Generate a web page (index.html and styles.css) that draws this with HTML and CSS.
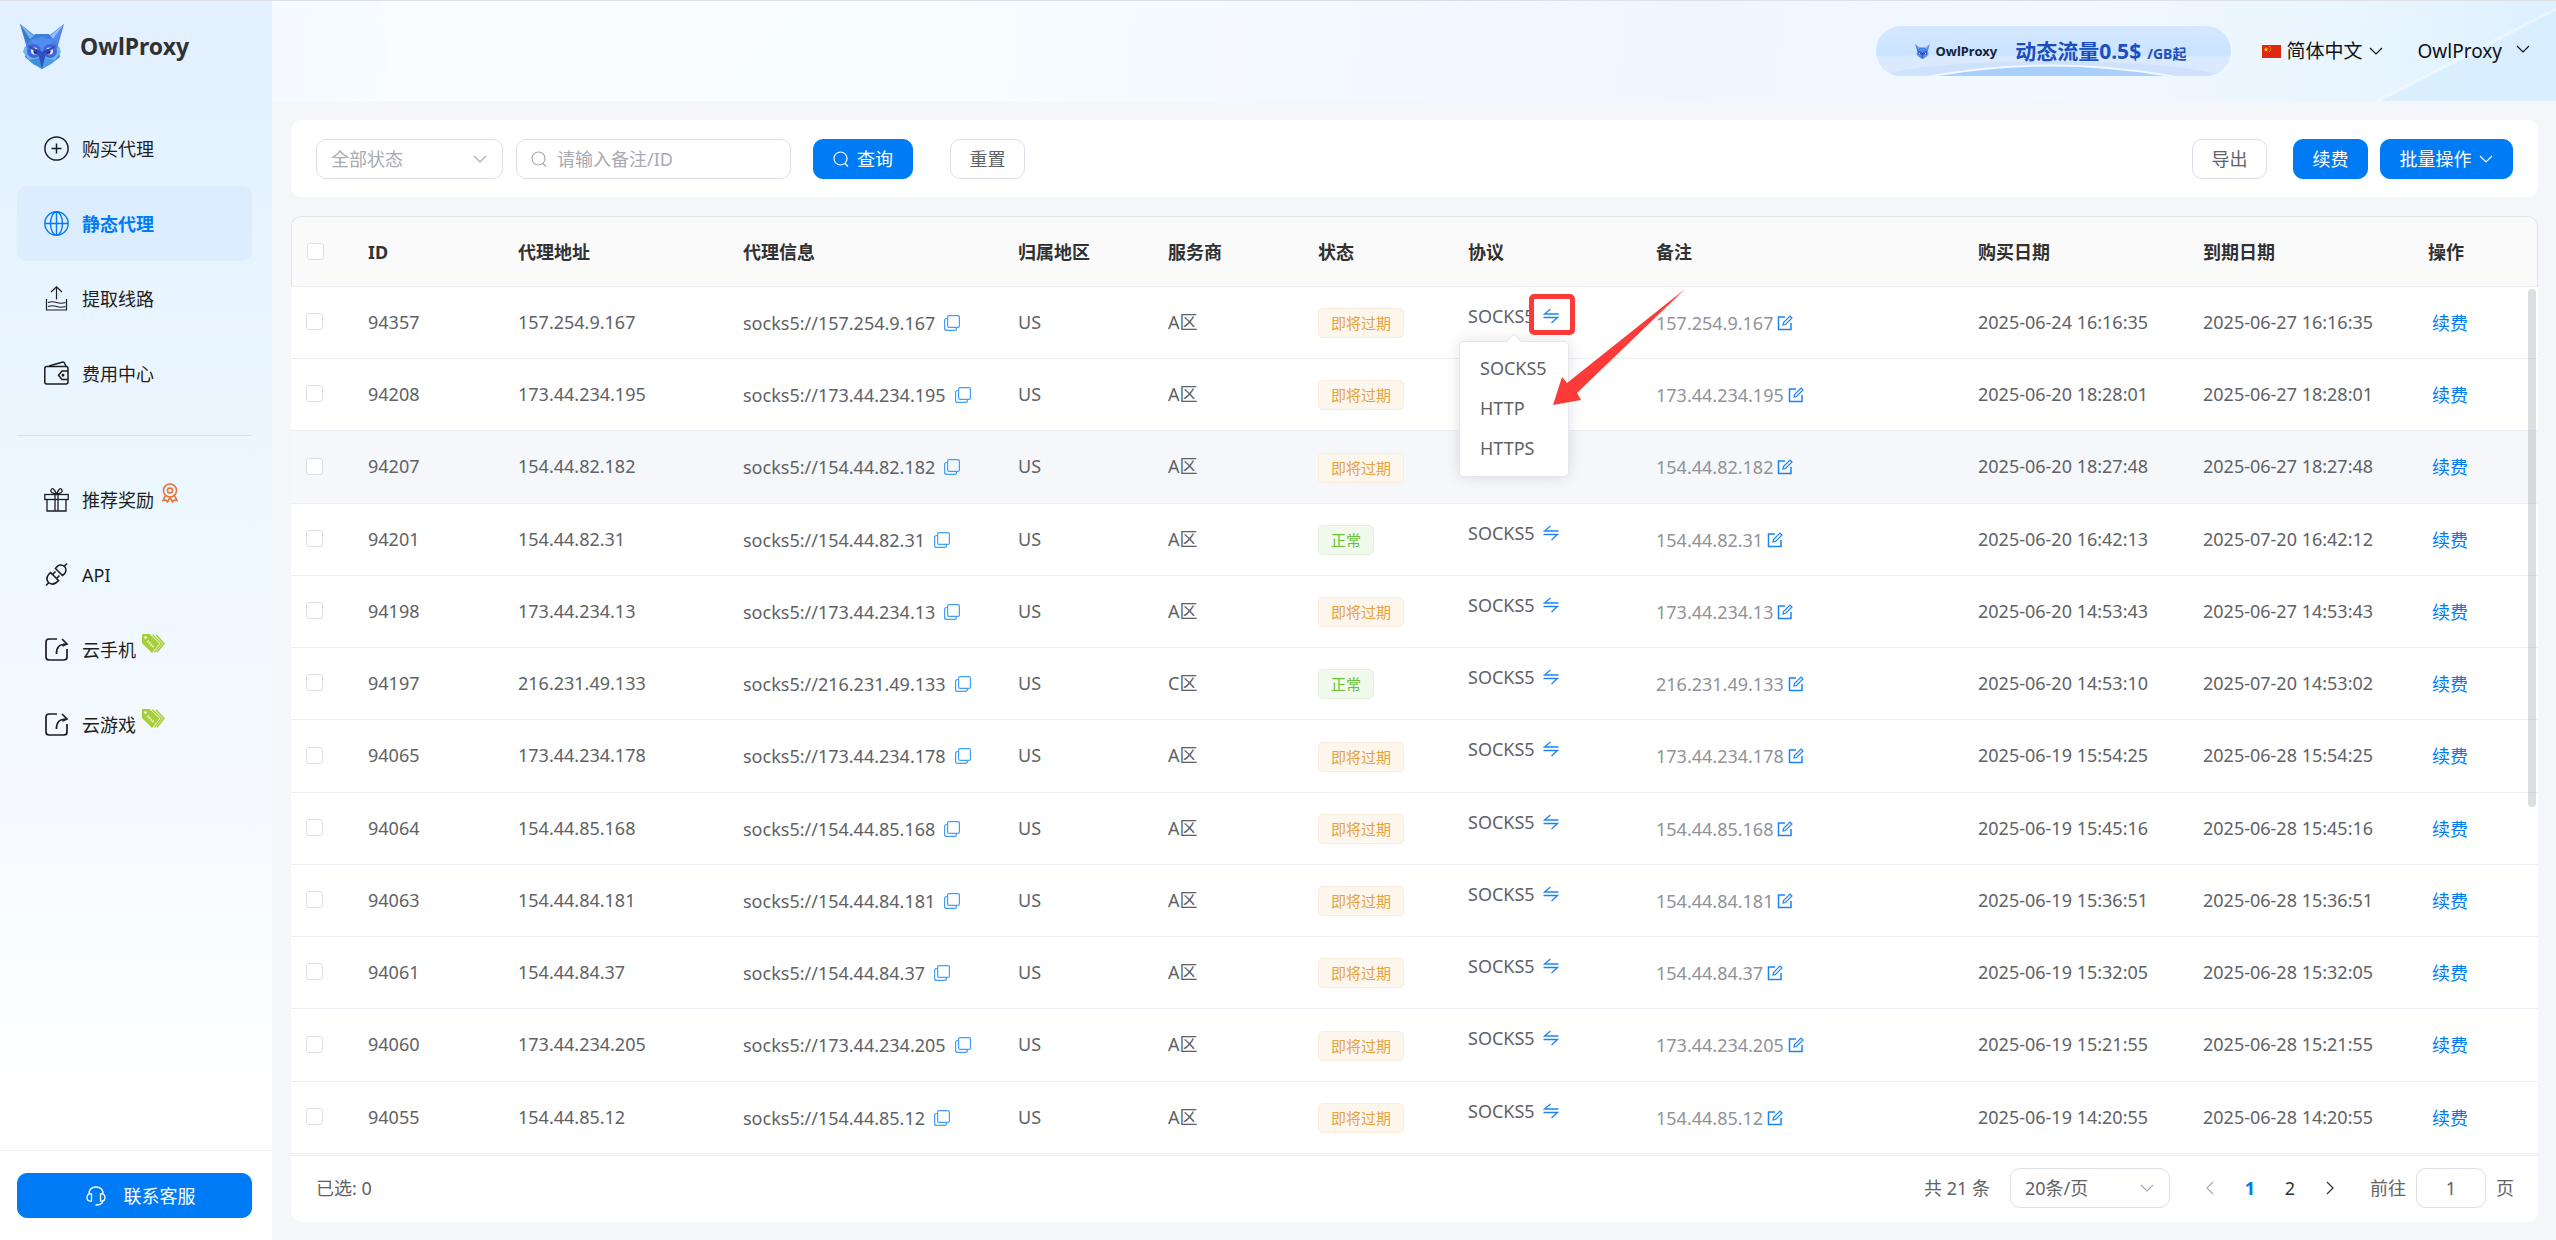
FILE: index.html
```html
<!DOCTYPE html>
<html lang="zh-CN">
<head>
<meta charset="utf-8">
<title>OwlProxy</title>
<link rel="stylesheet" href="styles.css">
</head>
<body>
<svg class="sprite" aria-hidden="true">
  <symbol id="owl" viewBox="0 0 44 46">
    <path d="M0 1 L14 12 L30 12 L44 1 L38 22 L40 34 L31 41 L22 46 L13 41 L5 34 L6 22Z" fill="#4a7fe6"/>
    <path d="M0 1 L14 13 L7 20Z" fill="#3a78c8"/><path d="M0 1 L14 13 L10 16Z" fill="#74b4ee"/>
    <path d="M44 1 L30 13 L37 20Z" fill="#5a84fa"/><path d="M44 1 L30 13 L33 16Z" fill="#8cc4fa"/>
    <path d="M15 11 L29 11 L34 18 L22 16 L10 18Z" fill="#3f7fdc"/>
    <path d="M10 17 L22 14 L34 17 L22 32Z" fill="#4f8df2"/>
    <path d="M5 23 L3 29 L9 37 L22 46 L35 37 L41 29 L39 23 L28 34 L22 30 L16 34Z" fill="#6cb8ee"/>
    <path d="M9 37 L19 35 L22 46Z" fill="#3c8fd8"/><path d="M35 37 L25 35 L22 46Z" fill="#4a9ee4"/>
    <circle cx="14" cy="28" r="7" fill="#4663de"/><circle cx="30" cy="28" r="7" fill="#4663de"/>
    <circle cx="14.500" cy="28" r="3.500" fill="#dfe9ff"/><circle cx="29.500" cy="28" r="3.500" fill="#dfe9ff"/>
    <circle cx="16" cy="28.500" r="2.500" fill="#1b2f78"/><circle cx="28" cy="28.500" r="2.500" fill="#1b2f78"/>
    <path d="M8 22 L22 29 L36 22 L34 25 L22 33 L10 25Z" fill="#2c49b8"/>
    <path d="M18 31 L22 28 L26 31 L22 46Z" fill="#2d53c0"/>
  </symbol>
  <symbol id="chev" viewBox="0 0 16 16"><path d="M2 5 L8 11 L14 5" fill="none" stroke="currentColor" stroke-width="1.2"/></symbol>
  <symbol id="search" viewBox="0 0 16 16"><g fill="none" stroke="currentColor" stroke-width="1.2"><circle cx="7.5" cy="7.5" r="6.5"/><path d="M11.5 12 L15 15.500"/></g></symbol>
  <symbol id="copy" viewBox="0 0 16 16"><g fill="none" stroke="currentColor" stroke-width="1.2"><rect x="3.600" y="0.600" width="11.800" height="11.800" rx="1.500"/><path d="M3.600 3.500 H2.500 Q0.600 3.500 0.600 5.400 V13.400 Q0.600 15.400 2.600 15.400 H10.500 Q12.400 15.400 12.400 13.500 V12.500"/></g></symbol>
  <symbol id="edit" viewBox="0 0 16 16"><g fill="none" stroke="currentColor" stroke-width="1.500"><path d="M8 2 H1.500 V14.500 H14 V8"/><path d="M6 10 L6.500 7.500 L13 1 L15 3 L8.500 9.500Z" stroke-width="1.200"/></g></symbol>
  <symbol id="swap" viewBox="0 0 16 16"><path d="M7.500 1 L1.500 6 H15.500 M0.500 9.500 H14.500 L8.500 15" fill="none" stroke="currentColor" stroke-width="1.300"/></symbol>
  <symbol id="share" viewBox="0 0 25 25"><g fill="none" stroke="currentColor" stroke-width="1.700"><path d="M13 2 H5 Q2 2 2 5 V20 Q2 23 5 23 H20 Q23 23 23 20 V12"/><path d="M12.500 17 Q12 7 22.500 7 M18 2 L23 7 L18.500 9"/></g></symbol>
  <symbol id="sale" viewBox="0 0 23 19"><path d="M0 1 Q0 0 1 0 H7.500 L17.500 9.500 L10 19 L0 9Z" fill="#a6ce39"/><path d="M10.500 0.700 L19.500 9.500 L12.500 18.300 M14 0.700 L22 9.500 L15 18.300" fill="none" stroke="#a6ce39" stroke-width="1.500"/><circle cx="3.500" cy="3.500" r="1.300" fill="#fff"/><path d="M5.500 7 L11.500 13" stroke="#e5f2c0" stroke-width="2.500" stroke-dasharray="1.500 0.800"/></symbol>
</svg>
<div class="app">
  <aside class="side">
    <a class="brand" href="#"><svg class="brand-logo"><use href="#owl"/></svg><span>OwlProxy</span></a>
    <nav class="nav">
      <a class="nav-item" href="#"><svg class="nav-icon" viewBox="0 0 25 25"><g fill="none" stroke="currentColor" stroke-width="1.500"><circle cx="12.500" cy="12.500" r="11.600"/><path d="M12.500 7.500 V17.500 M7.500 12.500 H17.500"/></g></svg><span>购买代理</span></a>
      <a class="nav-item active" href="#"><svg class="nav-icon" viewBox="0 0 25 25"><g fill="none" stroke="currentColor" stroke-width="1.400"><circle cx="12.500" cy="12.500" r="11.700"/><ellipse cx="12.500" cy="12.500" rx="6" ry="11.700"/><path d="M12.500 1 V24 M1 12.500 H24"/></g></svg><span>静态代理</span></a>
      <a class="nav-item" href="#"><svg class="nav-icon" viewBox="0 0 25 25"><g fill="none" stroke="currentColor" stroke-width="1.200"><path d="M12.500 13.500 V1 M7 6 L12.500 0.800 L18 6 M2.500 13 V24 H22.500 V13"/><path d="M4 16.500 Q8 15 12.500 16.500 T21.500 16.500 M4 20.500 Q8 19 12.500 20.500 T21.500 20.500"/></g></svg><span>提取线路</span></a>
      <a class="nav-item" href="#"><svg class="nav-icon" viewBox="0 0 25 25"><g fill="none" stroke="currentColor" stroke-width="1.500"><rect x="0.800" y="5.500" width="23.200" height="17.500" rx="2"/><path d="M5 5 L18 1.200 Q20 0.700 21 3 L22 5.500 M24 10 H18 L14.500 14.200 L18 18.500 H24"/><circle cx="19" cy="14.300" r="0.700"/></g></svg><span>费用中心</span></a>
    </nav>
    <nav class="nav nav-second">
      <a class="nav-item" href="#"><svg class="nav-icon" viewBox="0 0 25 25"><g fill="none" stroke="currentColor" stroke-width="1.300"><rect x="0.800" y="7.500" width="23.400" height="5"/><path d="M3 12.500 V24 H22 V12.500 M11 7.500 V24 M14 7.500 V24 M12.500 7 Q6 6 7 3 Q9 -1 12.500 7 Q16 -1 18 3 Q19 6 12.500 7"/></g></svg><span>推荐奖励</span><svg class="medal" viewBox="0 0 16 20"><g fill="none" stroke="#e8743b" stroke-width="1.600"><circle cx="8" cy="7.500" r="6.500"/><circle cx="8" cy="7.500" r="2.500"/><path d="M3.500 12.500 L1 17.500 L4 17 L5.500 19 L8 14.500 L10.500 19 L12 17 L15 17.500 L12.500 12.500"/></g></svg></a>
      <a class="nav-item" href="#"><svg class="nav-icon" viewBox="0 0 25 25"><g fill="none" stroke="currentColor" stroke-width="1.600"><path d="M2 23.500 L5 20.500 M20 4.500 L23 1.500"/><path d="M6.500 10.500 L14.500 18.500 C11 22.500 7.500 23 4.500 20.500 C2 17.500 2.500 14 6.500 10.500Z"/><path d="M11.500 6.500 L18.500 13.500 C22.500 10.500 23 7 20.500 4.500 C17.500 2 14 2.500 11.500 6.500Z"/><path d="M8.500 12.500 L11.500 9.500 M12.500 16.500 L15.500 13.500"/></g></svg><span>API</span></a>
      <a class="nav-item" href="#"><svg class="nav-icon"><use href="#share"/></svg><span>云手机</span><svg class="sale"><use href="#sale"/></svg></a>
      <a class="nav-item" href="#"><svg class="nav-icon"><use href="#share"/></svg><span>云游戏</span><svg class="sale"><use href="#sale"/></svg></a>
    </nav>
    <div class="side-foot">
      <button class="btn primary contact" type="button"><svg class="headset" viewBox="0 0 20 20"><g fill="none" stroke="currentColor" stroke-width="1.300"><path d="M3 8 Q3 1 10 1 T17 8 M17 15 Q16 19 9.500 19"/><path d="M5.500 8 Q1 7.500 1 11.500 T5.500 15Z M14.500 8 Q19 7.500 19 11.500 T14.500 15Z"/></g></svg><span>联系客服</span></button>
    </div>
  </aside>
  <div class="main">
    <header class="top">
      <svg class="top-bg" viewBox="0 0 2284 100" preserveAspectRatio="none" aria-hidden="true"><path d="M108 0 L122 100 H420 L520 0Z" fill="#fff" opacity=".3"/><path d="M2284 10 L2110 100 H2284Z" fill="#d6edfe" opacity=".7"/><path d="M2284 8 L2105 100" stroke="#fff" stroke-width="3" opacity=".35"/></svg>
      <a class="promo" href="#">
        <svg class="promo-bg" viewBox="0 0 355 50" preserveAspectRatio="none" aria-hidden="true"><ellipse cx="175" cy="58" rx="185" ry="23" fill="#cfe2fd"/><path d="M45 52 Q175 27 305 52" fill="#a9cffd" stroke="#f2f8ff" stroke-width="2"/></svg>
        <svg class="promo-owl"><use href="#owl"/></svg><b class="promo-name">OwlProxy</b><b class="promo-main">动态流量0.5$</b><b class="promo-unit">/GB起</b>
      </a>
      <button class="pick lang" type="button"><svg class="flag" viewBox="0 0 19 13"><rect width="19" height="13" fill="#de2910"/><path d="M4 2 L4.600 3.700 H6.400 L5 4.700 L5.500 6.500 L4 5.400 L2.500 6.500 L3 4.700 L1.600 3.700 H3.400Z" fill="#ffde00"/><path d="M7 1.500h1M8 3h1M8 5h1M7 6.500h1" stroke="#ffde00" stroke-width=".8"/></svg><span>简体中文</span><svg class="chev"><use href="#chev"/></svg></button>
      <button class="pick user" type="button"><span>OwlProxy</span><svg class="chev"><use href="#chev"/></svg></button>
    </header>
    <main class="content">
      <form class="filters">
        <span class="select-wrap status"><select class="field" aria-label="状态"><option>全部状态</option></select><svg class="chev"><use href="#chev"/></svg></span>
        <span class="search-wrap"><svg class="lens"><use href="#search"/></svg><input class="field" type="text" placeholder="请输入备注/ID" aria-label="备注/ID"></span>
        <button class="btn primary query" type="button"><svg class="lens"><use href="#search"/></svg><span>查询</span></button>
        <button class="btn reset" type="button">重置</button>
        <span class="spacer"></span>
        <button class="btn export" type="button">导出</button>
        <button class="btn primary renew" type="button">续费</button>
        <button class="btn primary batch" type="button"><span>批量操作</span><svg class="chev"><use href="#chev"/></svg></button>
      </form>
      <section class="panel">
        <div class="table-box">
          <table class="grid">
            <colgroup><col class="c-check"><col class="c-150"><col class="c-225"><col class="c-275"><col class="c-150"><col class="c-150"><col class="c-150"><col class="c-188"><col><col class="c-225"><col class="c-225"><col class="c-125"></colgroup>
            <thead><tr><th><input class="tick" type="checkbox" aria-label="全选"></th><th>ID</th><th>代理地址</th><th>代理信息</th><th>归属地区</th><th>服务商</th><th>状态</th><th>协议</th><th>备注</th><th>购买日期</th><th>到期日期</th><th>操作</th></tr></thead>
            <tbody id="rows"></tbody>
          </table>
          <div class="scroll-thumb"></div>
        </div>
        <footer class="foot">
          <span class="picked">已选: 0</span>
          <span class="spacer"></span>
          <span class="total">共 21 条</span>
          <span class="select-wrap size"><select class="field" aria-label="每页条数"><option>20条/页</option></select><svg class="chev"><use href="#chev"/></svg></span>
          <div class="pages">
            <button class="page" type="button" aria-label="上一页" disabled><svg class="chev prev"><use href="#chev"/></svg></button>
            <button class="page current" type="button">1</button>
            <button class="page" type="button">2</button>
            <button class="page" type="button" aria-label="下一页"><svg class="chev next"><use href="#chev"/></svg></button>
          </div>
          <label class="jump"><span>前往</span><input class="field" type="text" value="1"><span>页</span></label>
        </footer>
      </section>
    </main>
  </div>
</div>
<script src="rows.js"></script>
</body>
</html>
```
FILE: rows.js
```js
const rows = [
  ["94357", "157.254.9.167", "A", 0, "2025-06-24 16:16:35", "2025-06-27 16:16:35"],
  ["94208", "173.44.234.195", "A", 0, "2025-06-20 18:28:01", "2025-06-27 18:28:01"],
  ["94207", "154.44.82.182", "A", 0, "2025-06-20 18:27:48", "2025-06-27 18:27:48"],
  ["94201", "154.44.82.31", "A", 1, "2025-06-20 16:42:13", "2025-07-20 16:42:12"],
  ["94198", "173.44.234.13", "A", 0, "2025-06-20 14:53:43", "2025-06-27 14:53:43"],
  ["94197", "216.231.49.133", "C", 1, "2025-06-20 14:53:10", "2025-07-20 14:53:02"],
  ["94065", "173.44.234.178", "A", 0, "2025-06-19 15:54:25", "2025-06-28 15:54:25"],
  ["94064", "154.44.85.168", "A", 0, "2025-06-19 15:45:16", "2025-06-28 15:45:16"],
  ["94063", "154.44.84.181", "A", 0, "2025-06-19 15:36:51", "2025-06-28 15:36:51"],
  ["94061", "154.44.84.37", "A", 0, "2025-06-19 15:32:05", "2025-06-28 15:32:05"],
  ["94060", "173.44.234.205", "A", 0, "2025-06-19 15:21:55", "2025-06-28 15:21:55"],
  ["94055", "154.44.85.12", "A", 0, "2025-06-19 14:20:55", "2025-06-28 14:20:55"]
];
const openRow = 0;
const icon = (name) => `<svg class="ico"><use href="#${name}"/></svg>`;
const menu = `<span class="marker"></span>
  <div class="menu" role="menu"><button type="button" role="menuitem">SOCKS5</button><button type="button" role="menuitem">HTTP</button><button type="button" role="menuitem">HTTPS</button></div>
  <svg class="pointer" viewBox="0 0 136 120" aria-hidden="true"><path d="M1 117 L10 89 L15 95 L133 1 L25 105 L29 112Z" fill="#fc3a38"/></svg>`;
// The two rows below the open menu lie under it, so their protocol is not painted.
const covered = (i) => i === openRow + 1 || i === openRow + 2;
document.getElementById("rows").innerHTML = rows.map(([id, ip, zone, ok, from, to], i) => `
<tr class="${i === 2 ? "hover" : ""}">
  <td><input class="tick" type="checkbox" aria-label="${id}"></td>
  <td>${id}</td>
  <td>${ip}</td>
  <td><span class="pair info">socks5://${ip}<button class="mini copy" type="button" aria-label="复制">${icon("copy")}</button></span></td>
  <td>US</td>
  <td>${zone}区</td>
  <td class="low"><span class="tag ${ok ? "ok" : "warn"}">${ok ? "正常" : "即将过期"}</span></td>
  <td>${covered(i) ? "" : `<span class="pair protocol">SOCKS5<button class="mini" type="button" aria-label="切换">${icon("swap")}</button>${i === openRow ? menu : ""}</span>`}</td>
  <td><span class="pair note">${ip}<button class="mini" type="button" aria-label="编辑">${icon("edit")}</button></span></td>
  <td>${from}</td>
  <td>${to}</td>
  <td class="low"><a class="op" href="#">续费</a></td>
</tr>`).join("");
```
FILE: styles.css
```css
* { box-sizing: border-box; }
body {
  margin: 0;
  font: 18px/28px "Noto Sans", "Noto Sans CJK SC", sans-serif;
  color: #606266;
  background: #f4f6f9;
}
button, input, select { font: inherit; color: inherit; }
button { padding: 0; border: 0; background: none; cursor: pointer; }
a { color: inherit; text-decoration: none; }
svg { flex: none; }
.sprite { position: absolute; width: 0; height: 0; }
.spacer { flex: 1; }

.app { display: flex; min-height: 100vh; border-top: 1px solid #dcdfe3; }

.side {
  display: flex;
  flex-direction: column;
  flex: none;
  width: 272px;
  background: linear-gradient(#e2f0ff, #eef8ff 45%, #f4f9ff 60%, #fff 90%);
}
.brand {
  display: flex;
  align-items: center;
  gap: 16px;
  height: 90px;
  padding: 0 20px;
  font-size: 23px;
  font-weight: 700;
  color: #303133;
}
.brand-logo { width: 44px; height: 46px; }
.nav { margin: 20px 20px 0 17px; }
.nav-second { margin-top: 24px; padding-top: 26px; border-top: 1px solid #d8dee6; }
.nav-item {
  display: flex;
  align-items: center;
  gap: 13px;
  height: 75px;
  padding-left: 27px;
  border-radius: 10px;
  color: #1d1e22;
}
.nav-item.active { background: #dbedfe; color: #007bf6; font-weight: 700; }
.nav-icon { width: 25px; height: 25px; }
.medal { width: 16px; height: 20px; margin: 0 0 14px -5px; }
.sale { width: 23px; height: 19px; margin: 0 0 12px -7px; }
.side-foot { margin-top: auto; padding: 22px 20px 22px 17px; border-top: 1px solid #f0f2f5; }

.btn {
  display: inline-flex;
  align-items: center;
  justify-content: center;
  height: 40px;
  border: 1px solid #dcdfe6;
  border-radius: 10px;
  background: #fff;
}
.primary { border-color: #007bf6; background: #007bf6; color: #fff; }
.contact { width: 100%; height: 45px; gap: 18px; padding-left: 12px; }
.headset { width: 20px; height: 20px; }

.main { display: flex; flex-direction: column; flex: 1; min-width: 0; }
.top {
  position: relative;
  display: flex;
  align-items: center;
  justify-content: flex-end;
  height: 100px;
  padding-right: 25px;
  background: linear-gradient(95deg, #f4faff, #f8fdff 10%, #f7fcff 30%, #f3f8ff 50%, #eef6ff 62%, #f2f8ff 78%, #e8f5ff 92%, #dcf0fe);
  color: #101114;
  font-size: 19px;
}
.top-bg, .promo-bg { position: absolute; inset: 0; width: 100%; height: 100%; }
.promo {
  position: relative;
  display: flex;
  align-items: center;
  width: 355px;
  height: 50px;
  padding-left: 39px;
  border-radius: 25px;
  overflow: hidden;
  background: linear-gradient(#d5e7ff, #c9e4ff 58%, #dbeafe 62%, #d9e9ff);
  color: #1b4fc0;
}
.promo > b, .promo-owl { position: relative; }
.promo-owl { width: 15px; height: 15px; margin-right: 5px; }
.promo-name { font-size: 13px; color: #15233c; }
.promo-main { margin-left: 18px; font-size: 21px; }
.promo-unit { margin: 6px 0 0 6px; font-size: 14px; }
.pick { position: relative; display: flex; align-items: center; }
.lang { margin-left: 31px; gap: 5px; }
.lang .flag { width: 19px; height: 13px; }
.user { margin-left: 34px; gap: 13px; }
.user .chev { margin-bottom: 4px; }
.chev { width: 16px; height: 16px; }

.content { display: flex; flex-direction: column; flex: 1; gap: 19px; padding: 19px 18px 18px 19px; }
.filters {
  display: flex;
  align-items: center;
  height: 77px;
  padding: 0 25px;
  border-radius: 10px;
  background: #fff;
}
.field {
  width: 100%;
  height: 40px;
  border: 1px solid #dcdfe6;
  border-radius: 10px;
  background: #fff;
  outline: 0;
  appearance: none;
}
.field::placeholder { color: #a8abb2; opacity: 1; }
.select-wrap, .search-wrap { position: relative; display: flex; align-items: center; color: #a8abb2; }
.select-wrap .field { padding: 0 40px 0 14px; }
.select-wrap .chev { position: absolute; right: 15px; pointer-events: none; }
.status { width: 187px; }
.search-wrap { width: 275px; margin-left: 13px; }
.search-wrap .field { padding-left: 40px; }
.lens { width: 16px; height: 16px; }
.search-wrap .lens { position: absolute; left: 15px; }
.query { width: 100px; margin-left: 22px; gap: 8px; }
.reset { width: 75px; margin-left: 37px; }
.export { width: 75px; }
.renew { width: 75px; margin-left: 26px; }
.batch { width: 133px; margin-left: 12px; gap: 6px; }

.panel { flex: 1; border-radius: 10px; background: #fff; }
.table-box { position: relative; padding-bottom: 1px; border-bottom: 1px solid #ebeef5; }
.grid { width: 100%; table-layout: fixed; border-collapse: separate; border-spacing: 0; }
.c-check { width: 62px; }
.c-125 { width: 125px; }
.c-150 { width: 150px; }
.c-188 { width: 188px; }
.c-225 { width: 225px; }
.c-275 { width: 275px; }
th, td { padding: 0 0 0 15px; text-align: left; white-space: nowrap; border-bottom: 1px solid #ebeef5; }
th { height: 71px; background: #fafafa; color: #303133; font-weight: 700; border-top: 1px solid #e2e4e7; }
th:first-child { border-left: 1px solid #e2e4e7; border-top-left-radius: 10px; }
th:last-child { border-right: 1px solid #e2e4e7; border-top-right-radius: 10px; }
td { height: 72px; padding-bottom: 2px; }
tr:nth-child(4n+3) td { height: 73px; }
td.low { padding-bottom: 0; }
.hover td { background: #f5f7fa; }
.tick {
  display: block;
  width: 17px;
  height: 17px;
  margin: 0;
  border: 1px solid #dcdfe6;
  border-radius: 3px;
  background: #fff;
  appearance: none;
}
.pair { position: relative; display: inline-flex; align-items: center; gap: 4px; vertical-align: middle; }
.info { gap: 9px; }
.note { color: #909399; }
.protocol { gap: 8px; margin-bottom: 12px; }
.mini { display: flex; color: #1b84f7; }
.copy { color: #409eff; }
.ico { width: 16px; height: 16px; }
.tag {
  display: inline-block;
  height: 30px;
  padding: 0 12px;
  border: 1px solid;
  border-radius: 5px;
  font-size: 15px;
  line-height: 28px;
  vertical-align: middle;
}
.warn { color: #e6a23c; background: #fdf6ec; border-color: #faecd8; }
.ok { color: #67c23a; background: #f0f9eb; border-color: #e1f3d8; }
.op { padding-left: 4px; color: #007bf6; }

.marker {
  position: absolute;
  left: 61px;
  top: -8px;
  z-index: 3;
  width: 46px;
  height: 41px;
  border: 5px solid #fc3a38;
  border-radius: 5px;
}
.menu {
  position: absolute;
  left: -9px;
  top: 39px;
  z-index: 2;
  display: flex;
  flex-direction: column;
  width: 110px;
  padding: 6px 0 8px;
  border: 1px solid #e4e7ed;
  border-radius: 5px;
  background: #fff;
  box-shadow: 0 0 15px rgba(0, 0, 0, .12);
}
.menu::before {
  content: "";
  position: absolute;
  left: 48px;
  top: -6px;
  width: 11px;
  height: 11px;
  border: 1px solid #e4e7ed;
  border-right: 0;
  border-bottom: 0;
  background: #fff;
  transform: rotate(45deg);
}
.menu button { height: 40px; padding-left: 20px; text-align: left; }
.pointer { position: absolute; left: 84px; top: -14px; z-index: 4; width: 136px; height: 120px; }
.scroll-thumb {
  position: absolute;
  right: 2px;
  top: 73px;
  width: 8px;
  height: 518px;
  border-radius: 4px;
  background: rgba(144, 147, 153, .3);
}

.foot { display: flex; align-items: center; padding: 12px 24px 12px 25px; }
.size { width: 160px; margin-left: 20px; color: #606266; }
.size .chev { color: #a8abb2; }
.pages { display: flex; margin: 0 20px; }
.page { display: flex; align-items: center; justify-content: center; width: 40px; height: 40px; color: #303133; }
.page:disabled { color: #a8abb2; }
.current { color: #007bf6; font-weight: 700; }
.prev { transform: rotate(90deg); }
.next { transform: rotate(-90deg); }
.jump { display: flex; align-items: center; gap: 10px; }
.jump .field { width: 70px; text-align: center; }
```
